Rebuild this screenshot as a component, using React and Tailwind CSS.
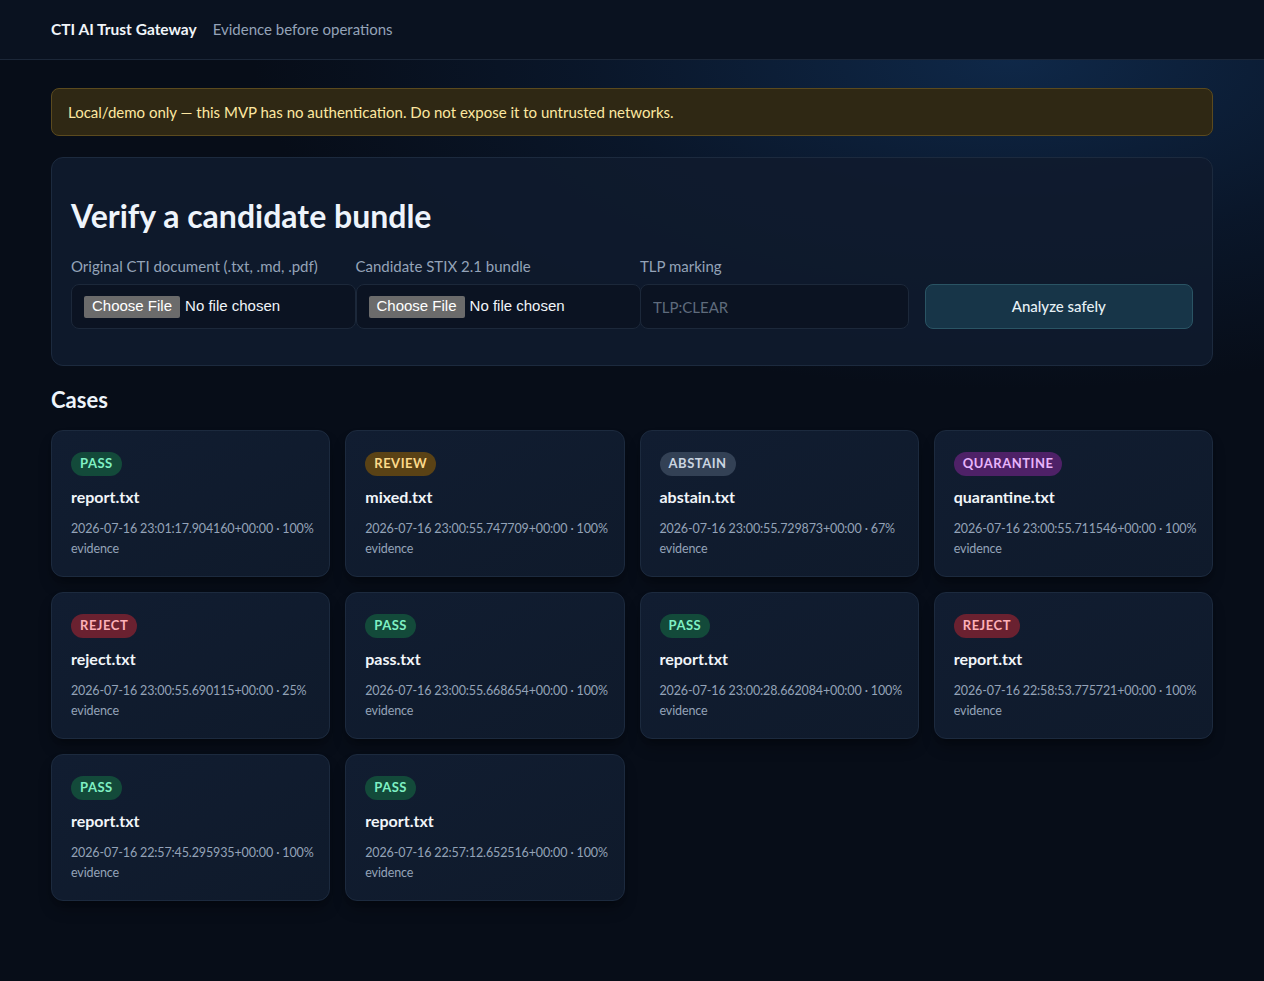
const cases = [
  { verdict: 'PASS', name: 'report.txt', ts: '2026-07-16 23:01:17.904160+00:00', pct: '100%' },
  { verdict: 'REVIEW', name: 'mixed.txt', ts: '2026-07-16 23:00:55.747709+00:00', pct: '100%' },
  { verdict: 'ABSTAIN', name: 'abstain.txt', ts: '2026-07-16 23:00:55.729873+00:00', pct: '67%' },
  { verdict: 'QUARANTINE', name: 'quarantine.txt', ts: '2026-07-16 23:00:55.711546+00:00', pct: '100%' },
  { verdict: 'REJECT', name: 'reject.txt', ts: '2026-07-16 23:00:55.690115+00:00', pct: '25%' },
  { verdict: 'PASS', name: 'pass.txt', ts: '2026-07-16 23:00:55.668654+00:00', pct: '100%' },
  { verdict: 'PASS', name: 'report.txt', ts: '2026-07-16 23:00:28.662084+00:00', pct: '100%' },
  { verdict: 'REJECT', name: 'report.txt', ts: '2026-07-16 22:58:53.775721+00:00', pct: '100%' },
  { verdict: 'PASS', name: 'report.txt', ts: '2026-07-16 22:57:45.295935+00:00', pct: '100%' },
  { verdict: 'PASS', name: 'report.txt', ts: '2026-07-16 22:57:12.652516+00:00', pct: '100%' },
]

const badgeClass = {
  PASS: 'bg-[#134a3a] text-[#7ff0c4]',
  REVIEW: 'bg-[#5a4215] text-[#fcd98a]',
  ABSTAIN: 'bg-[#334155] text-[#cbd5e1]',
  QUARANTINE: 'bg-[#4e2167] text-[#e8b4fb]',
  REJECT: 'bg-[#6a2130] text-[#fdb0b8]',
}

function FilePicker() {
  return (
    <div className="w-[285px] h-[45px] flex items-center pl-3 bg-[#0b1322] border border-[#1c283a] rounded-lg font-['Liberation_Sans',Arial,sans-serif] text-[15px] text-[#f1f5f9]">
      <span className="bg-[#6b6b6b] text-white px-2 h-[22px] flex items-center rounded-[2px] mr-[5px]">Choose File</span>
      <span>No file chosen</span>
    </div>
  )
}

export default function App() {
  const labelClass = "block text-[15px] text-[#94a3b8] mb-2 leading-5"
  return (
    <div className="min-h-[981px] bg-[#070d18] bg-[radial-gradient(ellipse_75%_42%_at_80%_6%,#0f2848_0%,rgba(12,30,56,0.55)_45%,transparent_80%)] font-['Lato',sans-serif] text-[#e2e8f0]">
      <header className="h-[60px] bg-[#0a1220] border-b border-[#1c2738] flex items-center px-[51px] gap-[16px]">
        <span className="text-[15.5px] font-bold text-[#f1f5f9]">CTI AI Trust Gateway</span>
        <span className="text-[15px] text-[#94a3b8]">Evidence before operations</span>
      </header>

      <main className="w-[1162px] mx-auto pt-[28px] pb-20">
        <div className="h-[48px] flex items-center px-4 bg-[#2f2814] border border-[#5b4a1e] rounded-lg text-[15px] text-[#fde7a0]">
          Local/demo only — this MVP has no authentication. Do not expose it to untrusted networks.
        </div>

        <section className="mt-[21px] bg-[#101b2d]/90 border border-[#1c2a3e] rounded-xl px-[19px] pt-[40px] pb-[36px]">
          <h1 className="text-[32px] leading-9 font-bold text-[#eef4fb]">Verify a candidate bundle</h1>
          <div className="grid grid-cols-4 gap-4 items-end mt-[22px]">
            <div>
              <label className={labelClass}>Original CTI document (.txt, .md, .pdf)</label>
              <FilePicker />
            </div>
            <div>
              <label className={labelClass}>Candidate STIX 2.1 bundle</label>
              <FilePicker />
            </div>
            <div>
              <label className={labelClass}>TLP marking</label>
              <input placeholder="TLP:CLEAR" className="w-full h-[45px] px-3 bg-[#0b1322] border border-[#1c283a] rounded-lg text-[15px] text-[#e2e8f0] placeholder-[#5f6b7c] outline-none" />
            </div>
            <button className="h-[45px] bg-[#173548] border border-[#2a5464] rounded-lg text-[15px] font-medium text-[#e6f0f5]">Analyze safely</button>
          </div>
        </section>

        <h2 className="mt-[20px] text-[22px] leading-[28px] font-bold text-[#eef4fb]">Cases</h2>
        <div className="grid grid-cols-4 gap-[15px] mt-[16px]">
          {cases.map((c, i) => (
            <div key={i} className="h-[147px] pl-[19px] pr-2 pt-[19px] pb-5 bg-gradient-to-br from-[#111d31] to-[#0f1a2b] border border-[#1c2a3e] rounded-xl shadow-lg shadow-black/30">
              <span className={`inline-flex items-center h-6 px-[9px] rounded-full text-[13px] font-bold tracking-[0.04em] ${badgeClass[c.verdict]}`}>{c.verdict}</span>
              <div className="mt-[11px] text-[16px] leading-5 font-bold text-[#f1f5f9]">{c.name}</div>
              <div className="mt-[12px] text-[12.5px] leading-5 tracking-[-0.01em] text-[#94a3b8]">{c.ts} · {c.pct} evidence</div>
            </div>
          ))}
        </div>
      </main>
    </div>
  )
}
